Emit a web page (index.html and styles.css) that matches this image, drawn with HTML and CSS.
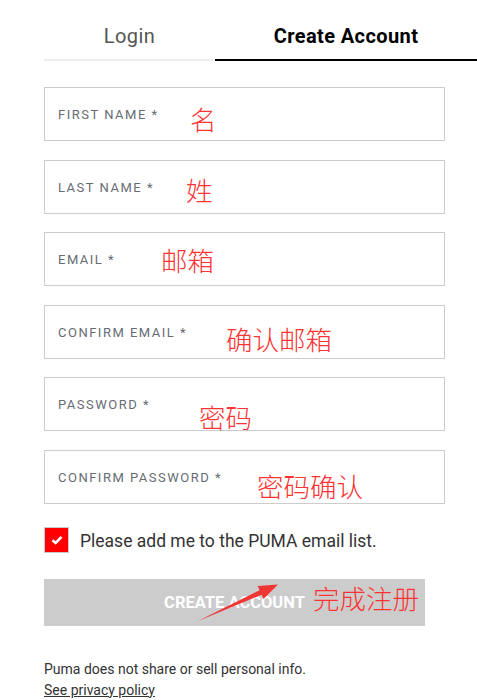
FILE: index.html
```html
<!DOCTYPE html>
<html lang="en">
<head>
    <meta charset="UTF-8">
    <meta name="viewport" content="width=device-width, initial-scale=1.0">
    <title>Create Account</title>
    <link rel="stylesheet" href="styles.css">
</head>
<body>

    <div class="page">
        <div class="tabs">
            <div class="tab">Login</div>
            <div class="tab active">Create Account</div>
        </div>

        <form class="form">
            <div class="field">
                <span class="field-label">FIRST NAME *</span>
                <span class="note note-first">名</span>
            </div>
            <div class="field">
                <span class="field-label">LAST NAME *</span>
                <span class="note note-last">姓</span>
            </div>
            <div class="field">
                <span class="field-label">EMAIL *</span>
                <span class="note note-email">邮箱</span>
            </div>
            <div class="field">
                <span class="field-label">CONFIRM EMAIL *</span>
                <span class="note note-cemail">确认邮箱</span>
            </div>
            <div class="field">
                <span class="field-label">PASSWORD *</span>
                <span class="note note-pass">密码</span>
            </div>
            <div class="field">
                <span class="field-label">CONFIRM PASSWORD *</span>
                <span class="note note-cpass">密码确认</span>
            </div>

            <label class="check-row">
                <span class="checkbox">
                    <svg width="12" height="10" viewBox="0 0 12 10"><path d="M1.5 5.2 L4.6 8 L10.5 1.8" fill="none" stroke="#fff" stroke-width="2.6"/></svg>
                </span>
                <span class="check-text">Please add me to the PUMA email list.</span>
            </label>

            <div class="submit">
                <span class="submit-text">CREATE ACCOUNT</span>
                <svg class="arrow" width="381" height="47" viewBox="0 0 381 47">
                    <polygon points="154,42 217.6,15.8 219.5,19.9 234,5.5 213.7,7.1 215.6,11.2" fill="#f03535"/>
                </svg>
                <span class="note note-submit">完成注册</span>
            </div>
        </form>

        <div class="footer">
            <p>Puma does not share or sell personal info.</p>
            <p><a href="#">See privacy policy</a></p>
        </div>
    </div>

</body>
</html>
```

FILE: styles.css
```css
body {
    margin: 0;
    font-family: Roboto, "Noto Sans", Arial, sans-serif;
    color: #333;
    background-color: #fff;
}
.page {
    padding-left: 44px;
}
.tabs {
    display: flex;
}
.tab {
    width: 171px;
    padding: 24px 0 11px;
    line-height: 24px;
    font-size: 20px;
    text-align: center;
    color: #555;
    letter-spacing: 0.4px;
    border-bottom: 2px solid #eee;
}
.tab.active {
    flex: 1;
    color: #000;
    font-weight: bold;
    border-bottom-color: #000;
}
.form {
    margin-top: 26px;
    display: flex;
    flex-direction: column;
    gap: 18.5px;
    width: 401px;
}
.field {
    position: relative;
    height: 54px;
    box-sizing: border-box;
    border: 1px solid #ccc;
    display: flex;
    align-items: center;
    padding: 1px 13px 0;
}
.field-label {
    font-size: 13px;
    letter-spacing: 1.5px;
    color: #676c74;
}
.note {
    position: absolute;
    font-family: "Noto Sans CJK SC", sans-serif;
    font-weight: 300;
    font-size: 26.5px;
    line-height: 26px;
    color: #f33;
    white-space: nowrap;
}
.note-first { left: 145px; top: 18px; }
.note-last { left: 141px; top: 16px; }
.note-email { left: 116px; top: 14px; }
.note-cemail { left: 181px; top: 20px; }
.note-pass { left: 154px; top: 26px; }
.note-cpass { left: 212px; top: 22px; }
.check-row {
    margin-top: 5px;
    display: flex;
    align-items: center;
    gap: 11px;
}
.checkbox {
    width: 25px;
    height: 26px;
    box-sizing: border-box;
    border: 1px solid #c8c8c8;
    background-color: #f00;
    display: flex;
    align-items: center;
    justify-content: center;
}
.check-text {
    font-size: 17.5px;
    color: #333;
    padding-top: 2px;
}
.submit {
    position: relative;
    margin-top: 7px;
    width: 381px;
    height: 47px;
    background-color: #ccc;
    display: flex;
    align-items: center;
    justify-content: center;
}
.submit-text {
    color: #fff;
    font-size: 16.5px;
    font-weight: bold;
    padding-top: 1px;
}
.arrow {
    position: absolute;
    left: 0;
    top: 0;
}
.note-submit { left: 269px; top: 6px; }
.footer {
    margin-top: 33px;
    font-size: 14px;
    line-height: 21px;
    color: #333;
}
.footer p {
    margin: 0;
}
.footer a {
    color: #333;
}
```
